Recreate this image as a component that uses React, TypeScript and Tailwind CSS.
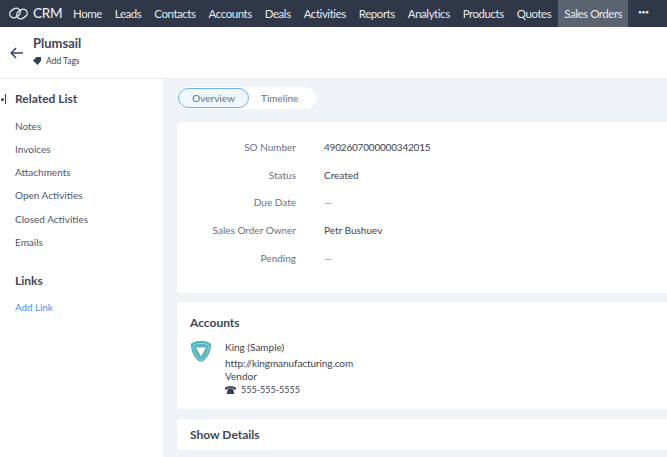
import React from "react";

const nav = ["Home", "Leads", "Contacts", "Accounts", "Deals", "Activities", "Reports", "Analytics", "Products", "Quotes"];
const rel = ["Notes", "Invoices", "Attachments", "Open Activities", "Closed Activities", "Emails"];
const rows = [
  ["SO Number", "4902607000000342015", "text-[#3c4353] tracking-[-0.2px]"],
  ["Status", "Created", "text-[#3c4353]"],
  ["Due Date", "—", "text-[#8a8f9c]"],
  ["Sales Order Owner", "Petr Bushuev", "text-[#3c4353]"],
  ["Pending", "—", "text-[#8a8f9c]"],
];

export default function App() {
  return (
    <div className="w-[667px] h-[457px] overflow-hidden flex flex-col bg-[#eff3f7] text-[#3c4353] font-['Lato','Liberation_Sans',sans-serif]">
      <div className="h-[27px] shrink-0 bg-[#2f3749] flex items-stretch text-[#e8eaee] text-[11.5px] tracking-[-0.45px]">
        <div className="flex items-center pl-[8px] w-[60px] shrink-0">
          <svg width="21" height="15" viewBox="0 0 21 15" fill="none" stroke="#dfe2e7" strokeWidth="1.4" className="shrink-0">
            <rect x="1.500" y="3" width="11" height="8" rx="4" transform="rotate(-35 7 7)" />
            <rect x="8.500" y="4" width="11" height="8" rx="4" transform="rotate(-35 14 8)" />
          </svg>
          <span className="ml-[4px] text-[13.500px] tracking-[-0.3px] font-medium">CRM</span>
        </div>
        <div className="flex items-center gap-[13px] ml-[13px]">
          {nav.map((n) => (
            <div key={n} className="whitespace-nowrap">{n}</div>
          ))}
        </div>
        <div className="ml-[7px] w-[70px] shrink-0 whitespace-nowrap bg-[#5b6270] flex items-center justify-center">Sales Orders</div>
        <div className="ml-[10px] flex items-center font-bold text-[6px] tracking-[0px] leading-none pb-[3px] whitespace-nowrap">•••</div>
      </div>

      <div className="h-[52px] shrink-0 bg-white border-b border-[#e6ebf0] flex items-center">
        <svg className="ml-[10px]" width="14" height="12" viewBox="0 0 14 12" fill="none" stroke="#34405a" strokeWidth="1.5">
          <path d="M13 6H1.500M6 1 1.200 6 6 11" />
        </svg>
        <div className="ml-[9px] flex flex-col -mt-[4px]">
          <div className="text-[13px] font-bold leading-[16px] text-[#3f4658]">Plumsail</div>
          <div className="mt-[4px] flex items-center text-[8.500px] leading-[12px] text-[#3c4353]">
            <svg width="9" height="8" viewBox="0 0 9 8" fill="#34405a"><path d="M0 3.500 3.500 0H8v4L4.500 8z" /></svg>
            <span className="ml-[4px]">Add Tags</span>
          </div>
        </div>
      </div>

      <div className="flex-1 flex min-h-0">
        <div className="w-[163px] shrink-0 bg-white flex flex-col">
          <div className="mt-[12px] h-[16px] flex items-center">
            <div className="w-[15px] h-[10px] flex items-center">
              <span className="ml-[1px] w-[3px] h-[3px] rounded-full bg-[#34405a]" />
              <span className="ml-[1px] w-[1px] h-[10px] bg-[#34405a]" />
            </div>
            <span className="text-[12px] font-bold text-[#3f4658]">Related List</span>
          </div>
          <div className="mt-[10.500px] flex flex-col gap-[7.300px] pl-[15px] text-[10px] leading-[16px] text-[#50566a]">
            {rel.map((r) => <div key={r}>{r}</div>)}
          </div>
          <div className="mt-[23.500px] pl-[15px] text-[12px] font-bold leading-[16px] text-[#3f4658]">Links</div>
          <div className="mt-[10px] pl-[15px] text-[10px] tracking-[-0.1px] leading-[16px] text-[#4d90f0]">Add Link</div>
        </div>

        <div className="flex-1 min-w-0 pl-[14px] flex flex-col">
          <div className="mt-[8px] h-[22px] w-[139px] bg-white rounded-full flex items-center text-[10px]">
            <div className="w-[71px] h-[20px] ml-[1px] rounded-full border border-[#6fb2ee] bg-[#eff6fc] flex items-center justify-center text-[#6a7080]">Overview</div>
            <div className="ml-[12px] text-[#6a7080]">Timeline</div>
          </div>

          <div className="mt-[13px] h-[171px] bg-white rounded-l-[4px] pt-[12px] text-[10px]">
            {rows.map(([k, v, c]) => (
              <div key={k} className="flex items-center h-[27.600px]">
                <div className="w-[119px] text-right text-[#6a7080]">{k}</div>
                <div className={`ml-[28px] ${c}`}>{v}</div>
              </div>
            ))}
          </div>

          <div className="mt-[9px] h-[107px] bg-white rounded-l-[4px] pl-[13px] pt-[13px]">
            <div className="text-[12px] font-bold leading-[16px] text-[#3f4658]">Accounts</div>
            <div className="mt-[9px] flex">
              <svg width="22" height="23" viewBox="0 0 22 23" fill="none">
                <path d="M1 3.500 7 1h8l6 2.500c.3 6.500-2 13-8 18H9C3 16.500 .7 10 1 3.500z" fill="#58b5bd" />
                <path d="M3.500 5.500 7.500 3.500h7l4 2c0 5-1.500 10-6.500 14.500h-2C5 15.500 3.500 10.500 3.500 5.500z" fill="none" stroke="#8fd3d8" strokeWidth="1" />
                <path d="M6 7.500h10L11 16.500z" fill="#fff" />
              </svg>
              <div className="ml-[13px] text-[10px] leading-[13px] text-[#3c4353]">
                <div className="leading-[14px] mb-[3px]">King (Sample)</div>
                <div className="tracking-[-0.08px]">http://kingmanufacturing.com</div>
                <div>Vendor</div>
                <div className="flex items-center">
                  <svg width="11" height="9" viewBox="0 0 10 8" fill="#34405a">
                    <path d="M0 2.500C1 .5 9 .5 10 2.500V4H7.500V2.800h-5V4H0z" /><path d="M2.500 4 3.500 3h3l1 1 1 4h-7z" />
                  </svg>
                  <span className="ml-[5px] text-[9px]">555-555-5555</span>
                </div>
              </div>
            </div>
          </div>

          <div className="mt-[10px] h-[31px] bg-white rounded-l-[4px] pl-[13px] flex items-center text-[12px] font-bold text-[#3f4658]">Show Details</div>
        </div>
      </div>
    </div>
  );
}
